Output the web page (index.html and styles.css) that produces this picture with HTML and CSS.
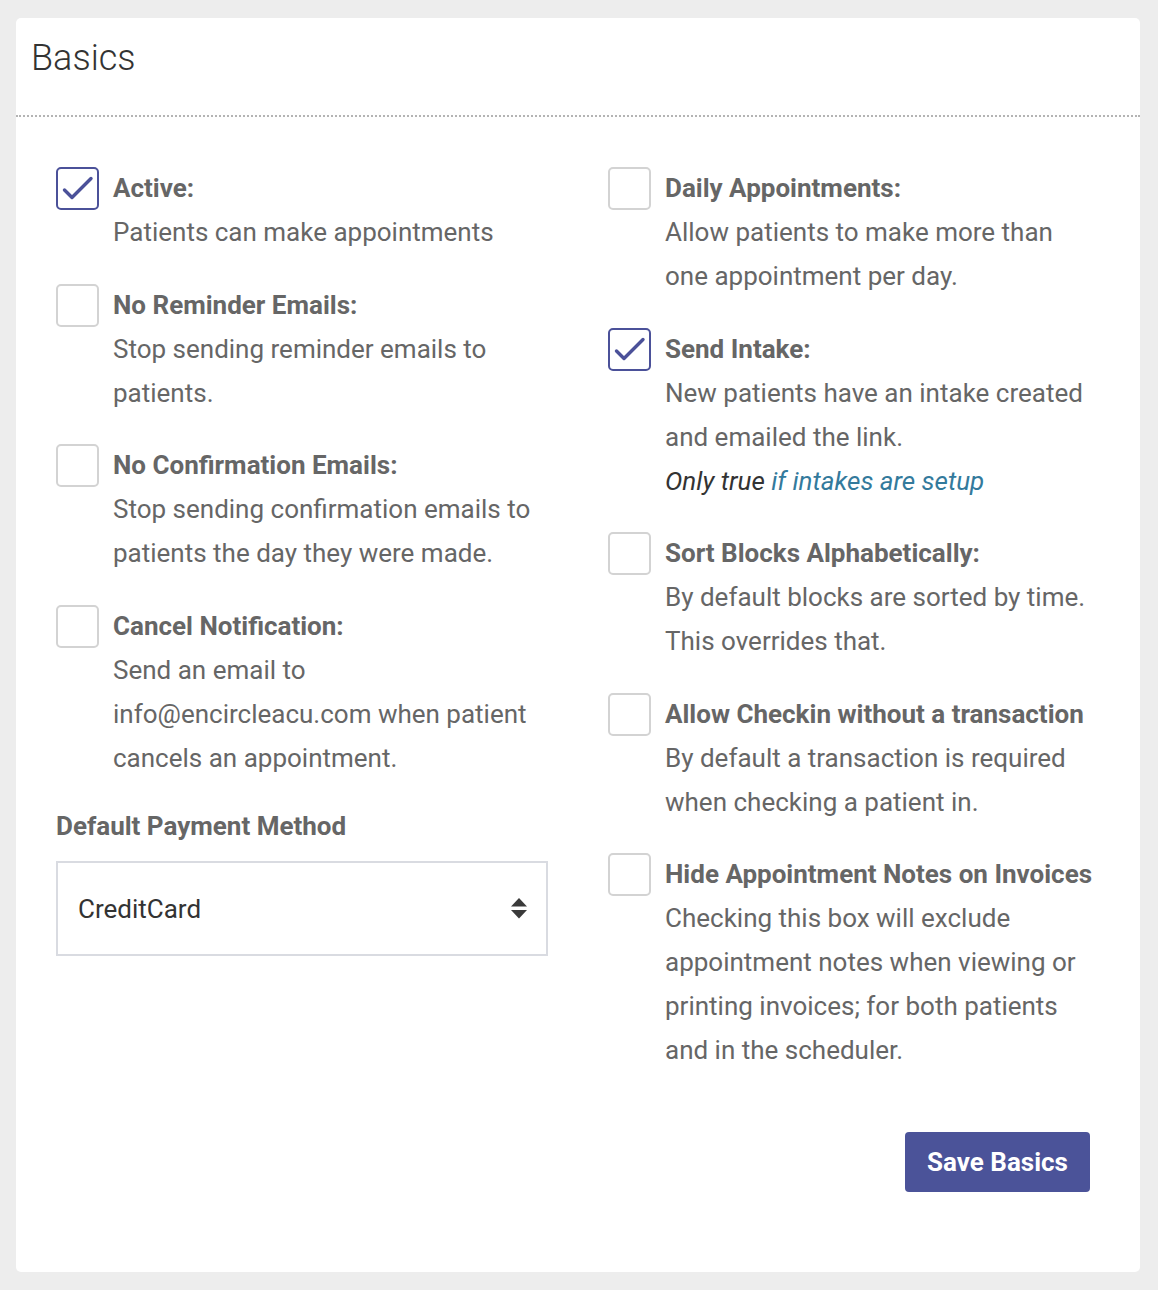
FILE: index.html
```html
<!DOCTYPE html>
<html>
<head>
<meta charset="utf-8">
<link rel="stylesheet" href="styles.css">
</head>
<body>
<div class="card">
  <div class="card-header"><h1 class="title">Basics</h1></div>
  <div class="card-body">
    <div class="columns">
      <div class="col">
        <div class="option">
          <span class="box checked"><svg viewBox="0 0 39 39"><path d="M6.5 21 L14 28.5 L33 9.5" /></svg></span>
          <div class="text">
            <div class="label">Active:</div>
            <div class="desc">Patients can make appointments</div>
          </div>
        </div>
        <div class="option">
          <span class="box"></span>
          <div class="text">
            <div class="label">No Reminder Emails:</div>
            <div class="desc">Stop sending reminder emails to patients.</div>
          </div>
        </div>
        <div class="option">
          <span class="box"></span>
          <div class="text">
            <div class="label">No Confirmation Emails:</div>
            <div class="desc">Stop sending confirmation emails to patients the day they were made.</div>
          </div>
        </div>
        <div class="option">
          <span class="box"></span>
          <div class="text">
            <div class="label">Cancel Notification:</div>
            <div class="desc">Send an email to info@encircleacu.com when patient cancels an appointment.</div>
          </div>
        </div>
        <div class="field">
          <div class="field-label">Default Payment Method</div>
          <div class="select">
            <span class="select-value">CreditCard</span>
            <svg class="select-arrows" viewBox="0 0 16 21"><path d="M8 0 L16 8.5 L0 8.5 Z"/><path d="M0 12 L16 12 L8 20.5 Z"/></svg>
          </div>
        </div>
      </div>
      <div class="col">
        <div class="option">
          <span class="box"></span>
          <div class="text">
            <div class="label">Daily Appointments:</div>
            <div class="desc">Allow patients to make more than one appointment per day.</div>
          </div>
        </div>
        <div class="option">
          <span class="box checked"><svg viewBox="0 0 39 39"><path d="M6.5 21 L14 28.5 L33 9.5" /></svg></span>
          <div class="text">
            <div class="label">Send Intake:</div>
            <div class="desc">New patients have an intake created and emailed the link.</div>
            <div class="note">Only true <a class="link" href="#">if intakes are setup</a></div>
          </div>
        </div>
        <div class="option">
          <span class="box"></span>
          <div class="text">
            <div class="label">Sort Blocks Alphabetically:</div>
            <div class="desc">By default blocks are sorted by time. This overrides that.</div>
          </div>
        </div>
        <div class="option">
          <span class="box"></span>
          <div class="text">
            <div class="label">Allow Checkin without a transaction</div>
            <div class="desc">By default a transaction is required when checking a patient in.</div>
          </div>
        </div>
        <div class="option">
          <span class="box"></span>
          <div class="text">
            <div class="label">Hide Appointment Notes on Invoices</div>
            <div class="desc">Checking this box will exclude appointment notes when viewing or printing invoices; for both patients and in the scheduler.</div>
          </div>
        </div>
      </div>
    </div>
    <div class="actions">
      <button class="btn">Save Basics</button>
    </div>
  </div>
</div>
</body>
</html>
```
FILE: styles.css
```css
html, body {
  margin: 0;
  padding: 0;
}
body {
  background: #ededed;
  font-family: Roboto, "Liberation Sans", sans-serif;
  padding: 18px 18px 18px 16px;
}
.card {
  background: #fff;
  border-radius: 5px;
  width: 1124px;
  height: 1254px;
  box-sizing: border-box;
}
.card-header {
  height: 99px;
  border-bottom: 2px dotted #b4b4b4;
  box-sizing: border-box;
  padding-left: 15px;
  display: flex;
  align-items: center;
}
.title {
  margin: 0;
  font-size: 36px;
  font-weight: 300;
  color: #333;
  padding-bottom: 18px;
}
.card-body {
  padding: 49px 40px 0 40px;
}
.columns {
  display: grid;
  grid-template-columns: 492px 492px;
  column-gap: 60px;
}
.option {
  display: flex;
  gap: 14px;
  margin-bottom: 28.5px;
}
.box {
  flex: 0 0 auto;
  width: 43px;
  height: 43px;
  box-sizing: border-box;
  border: 2px solid #d3d3d3;
  border-radius: 5px;
  margin-top: 1px;
  display: block;
}
.box.checked {
  border-color: #4b5199;
}
.box svg {
  width: 39px;
  height: 39px;
  display: block;
}
.box svg path {
  fill: none;
  stroke: #4b5199;
  stroke-width: 3.4;
  stroke-linecap: round;
  stroke-linejoin: round;
}
.text {
  font-size: 26px;
  line-height: 44px;
  color: #666;
}
.label {
  font-weight: 700;
  color: #666;
}
.note {
  font-style: italic;
  color: #333;
}
.link {
  color: #337a9c;
  text-decoration: none;
}
.field {
  margin-top: -4px;
}
.field-label {
  font-size: 26px;
  line-height: 44px;
  font-weight: 700;
  color: #666;
  margin-bottom: 13px;
}
.select {
  height: 95px;
  box-sizing: border-box;
  border: 2px solid #d9dbe1;
  display: flex;
  align-items: center;
  justify-content: space-between;
  padding: 0 19px 0 20px;
}
.select-value {
  font-size: 26px;
  color: #333;
}
.select-arrows {
  width: 16px;
  height: 21px;
  fill: #3a3a3a;
}
.actions {
  display: flex;
  justify-content: flex-end;
  padding-right: 10px;
  margin-top: 31.5px;
}
.btn {
  width: 185px;
  height: 60px;
  background: #4b5399;
  color: #fff;
  border: none;
  border-radius: 4px;
  font-family: Roboto, "Liberation Sans", sans-serif;
  font-size: 26px;
  font-weight: 700;
  padding: 0;
}
```
